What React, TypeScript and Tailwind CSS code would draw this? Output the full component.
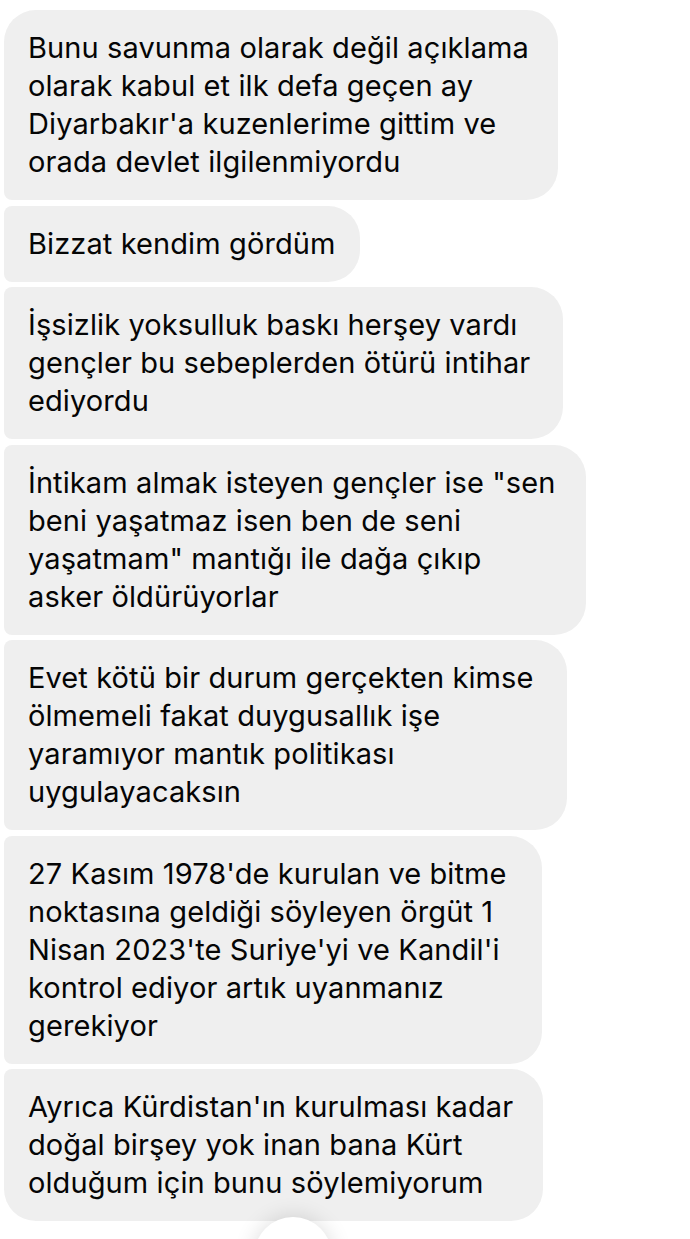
const messages: { lines: string[]; width: number }[] = [
  {
    lines: [
      "Bunu savunma olarak değil açıklama",
      "olarak kabul et ilk defa geçen ay",
      "Diyarbakır'a kuzenlerime gittim ve",
      "orada devlet ilgilenmiyordu",
    ],
    width: 554,
  },
  { lines: ["Bizzat kendim gördüm"], width: 356 },
  {
    lines: [
      "İşsizlik yoksulluk baskı herşey vardı",
      "gençler bu sebeplerden ötürü intihar",
      "ediyordu",
    ],
    width: 559,
  },
  {
    lines: [
      'İntikam almak isteyen gençler ise "sen',
      "beni yaşatmaz isen ben de seni",
      'yaşatmam" mantığı ile dağa çıkıp',
      "asker öldürüyorlar",
    ],
    width: 582,
  },
  {
    lines: [
      "Evet kötü bir durum gerçekten kimse",
      "ölmemeli fakat duygusallık işe",
      "yaramıyor mantık politikası",
      "uygulayacaksın",
    ],
    width: 563,
  },
  {
    lines: [
      "27 Kasım 1978'de kurulan ve bitme",
      "noktasına geldiği söyleyen örgüt 1",
      "Nisan 2023'te Suriye'yi ve Kandil'i",
      "kontrol ediyor artık uyanmanız",
      "gerekiyor",
    ],
    width: 538,
  },
  {
    lines: [
      "Ayrıca Kürdistan'ın kurulması kadar",
      "doğal birşey yok inan bana Kürt",
      "olduğum için bunu söylemiyorum",
    ],
    width: 539,
  },
];

function corners(i: number, n: number) {
  if (i === 0) return "rounded-[32px] rounded-bl-[8px]";
  if (i === n - 1) return "rounded-[32px] rounded-tl-[8px]";
  return "rounded-[32px] rounded-tl-[8px] rounded-bl-[8px]";
}

export default function App() {
  return (
    <div
      className="relative h-[1239px] w-[690px] overflow-hidden bg-white"
      style={{ fontFamily: "Inter, 'Noto Sans', sans-serif" }}
    >
      <div className="flex flex-col items-start gap-[5.5px] pl-[4px] pt-[10px]">
        {messages.map((m, i) => (
          <div
            key={i}
            className={`bg-[#efefef] py-[19px] pl-[24px] text-[29px] leading-[38px] text-[#050505] tracking-[0.1px] ${corners(i, messages.length)}`}
            style={{ width: m.width }}
          >
            {m.lines.map((l, j) => (
              <div key={j} className="whitespace-nowrap">
                {l}
              </div>
            ))}
          </div>
        ))}
      </div>

      {/* scroll-to-bottom button */}
      <div className="absolute left-[254px] top-[1217px] h-[78px] w-[78px] rounded-full bg-white shadow-[0_0_22px_rgba(0,0,0,0.14)]" />
    </div>
  );
}
